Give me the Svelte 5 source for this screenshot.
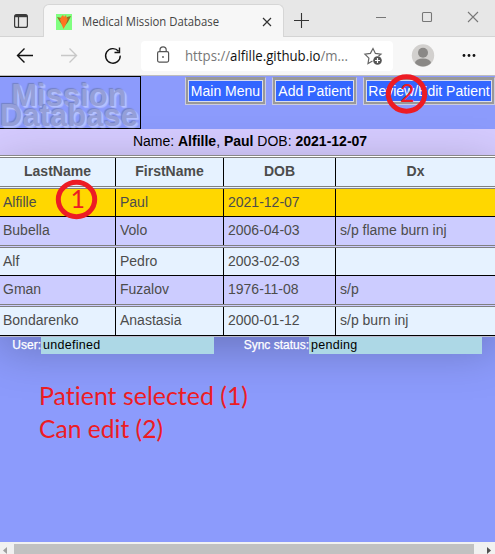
<script>
  const columns = ['LastName', 'FirstName', 'DOB', 'Dx'];
  const patients = [
    ['Alfille', 'Paul', '2021-12-07', ''],
    ['Bubella', 'Volo', '2006-04-03', 's/p flame burn inj'],
    ['Alf', 'Pedro', '2003-02-03', ''],
    ['Gman', 'Fuzalov', '1976-11-08', 's/p'],
    ['Bondarenko', 'Anastasia', '2000-01-12', 's/p burn inj']
  ];
</script>

<div class="window">
  <header class="tabs">
    <svg class="workspace" width="42" height="37" fill="none" stroke="#3b3b3b" stroke-width="1.2">
      <rect x="14.6" y="14.6" width="12.8" height="12.8" rx="2" />
      <path d="M15 16h12" stroke-width="2.4" /><path d="M18.500 17v10" />
    </svg>
    <div class="tab">
      <svg width="16" height="16" viewBox="0 0 16 16">
        <path fill="#80ff80" d="M0 0h16v16H0z" />
        <path fill="#8b7524" d="M1 3l5 1 2 3 3-4 4-1-3 6-4 5-4-5z" />
        <path fill="#ff7420" d="M5 3l2-2 1 2 2-2 1 4 1-1-2 6-2.500 5-2-5-2-6 1 1z" />
      </svg>
      <svg class="title" width="142" height="22"><text x="0" y="15" textLength="137" lengthAdjust="spacingAndGlyphs">Medical Mission Database</text></svg>
      <svg class="close" width="10" height="10" stroke="#333" stroke-width="1.2"><path d="M1 1l8 8M9 1l-8 8" /></svg>
    </div>
    <svg class="controls" width="210" height="37" fill="none" stroke="#777" stroke-width="1.1">
      <path stroke="#333" d="M10 20.500h15M17.500 13v15" />
      <path d="M92 17.500h10M184 12l10 10M194 12l-10 10" />
      <rect x="138.500" y="12.500" width="9" height="9" rx="1" />
    </svg>
  </header>

  <nav class="toolbar">
    <svg width="141" height="38" fill="none" stroke-width="1.4">
      <path stroke="#111" d="M33 18.500H18M24.500 11.500l-7 7 7 7" />
      <path stroke="#c8c8c8" d="M61 18.500h15M69.500 11.500l7 7-7 7" />
      <path stroke="#111" d="M118.500 14.200a7.300 7.300 0 1 0 1.700 4.400M119.500 10.500v5h-5" />
    </svg>
    <div class="address">
      <svg width="46" height="30" fill="none" stroke="#555" stroke-width="1.2">
        <rect x="16.600" y="10.600" width="11" height="10.500" rx="1.500" />
        <path d="M19 10.500v-1.500a3.100 3.100 0 0 1 6.200 0v1.500" />
        <circle cx="22" cy="16" r=".9" fill="#555" stroke="none" />
      </svg>
      <svg class="url" width="166" height="30"><text x="0" y="19.500" textLength="163" lengthAdjust="spacingAndGlyphs">https://<tspan>alfille.github.io</tspan>/m...</text></svg>
      <svg width="26" height="30" fill="none" stroke="#666" stroke-width="1.2">
        <path d="M12.500 20l-4.500 2.500.9-5.400-4-3.900 5.500-.8L13 7.500l2.400 4.900 5.500.8-2.500 2" />
        <circle cx="17.500" cy="19.500" r="4.300" fill="#555" stroke="none" />
        <path stroke="#fff" d="M15 19.500h5M17.500 17v5" />
      </svg>
    </div>
    <svg width="102" height="38">
      <circle cx="30" cy="18.500" r="11.200" fill="#d2d0ce" />
      <circle cx="30" cy="15.700" r="5" fill="#8a8886" />
      <path d="M22 26a8 4.500 0 0 1 16 0a11 11 0 0 1-16 0z" fill="#8a8886" />
      <g fill="#111"><circle cx="71" cy="18.500" r="1.400" /><circle cx="76" cy="18.500" r="1.400" /><circle cx="81" cy="18.500" r="1.400" /></g>
    </svg>
  </nav>

  <main>
    <div class="masthead">
      <div class="logo"><span>Mission</span><span>Database</span></div>
      <div class="actions">
        <button style:width="81px">Main Menu</button>
        <button style:width="85px">Add Patient</button>
        <button style:width="132px">Review/Edit Patient</button>
      </div>
    </div>
    <div class="patient">Name: <b>Alfille</b>, <b>Paul</b> DOB: <b>2021-12-07</b></div>
    <div class="table">
      <div class="row head">
        {#each columns as name}<div>{name}</div>{/each}
      </div>
      {#each patients as patient, i}
        <div class="row" class:selected={i === 0} class:even={i % 2 === 1}>
          {#each patient as value}<div>{value}</div>{/each}
        </div>
      {/each}
    </div>
    <div class="status">
      <label for="user">User:</label><output id="user">undefined</output>
      <label class="sync" for="sync">Sync status:</label><output id="sync">pending</output>
    </div>
    <svg class="notes" width="260" height="80">
      <text x="39" y="26" textLength="209" lengthAdjust="spacingAndGlyphs">Patient selected (1)</text>
      <text x="39" y="59" textLength="124" lengthAdjust="spacingAndGlyphs">Can edit (2)</text>
    </svg>
  </main>

  <div class="scrollbar">
    <svg width="14" height="10"><path d="M7 3v7L3 6.500z" fill="#a0a0a0" /></svg>
    <div class="thumb"></div>
    <svg width="21" height="10"><path d="M13 3v7l4-3.500z" fill="#505050" /></svg>
  </div>

  <svg class="mark one" width="42" height="40"><ellipse cx="20.500" cy="20.500" rx="18.200" ry="17.200" /><text x="14.500" y="29">1</text></svg>
  <svg class="mark two" width="42" height="40"><ellipse cx="20.500" cy="20" rx="18.200" ry="17.200" /><text x="14" y="27.500">2</text></svg>
</div>

<style>
  :global(body) { margin: 0; overflow: hidden; }
  .window { position: relative; width: 495px; height: 554px; display: flex; flex-direction: column; overflow: hidden; background: #8c9bfc; font-family: "Liberation Sans", Arial, sans-serif; }
  svg { display: block; flex: none; overflow: visible; }
  .tabs { height: 37px; flex: none; display: flex; background: #e7e7e7; box-shadow: inset 0 -1px #d4d4d4; }
  .tab { box-sizing: border-box; width: 241px; height: 33px; margin: 4px 0 0 1px; padding: 2px 11px 0 12px; display: flex; align-items: center; background: #f7f7f7; border: 1px solid #d6d6d6; border-bottom: 0; border-radius: 6px 6px 0 0; }
  .title { margin-left: 10px; }
  .title text { font: 12px "Open Sans", sans-serif; fill: #444; }
  .close { margin-left: auto; }
  .toolbar { height: 38px; flex: none; display: flex; align-items: flex-start; background: #f7f7f7; border-bottom: 1px solid #bdbdbd; }
  .address { width: 252px; height: 30px; margin-top: 4px; display: flex; background: #fff; border-radius: 4px; }
  .url { margin-left: -2px; margin-right: 9px; }
  .url text { font: 15px "Open Sans", sans-serif; fill: #777; }
  .url tspan { fill: #111; }
  main { height: 466px; flex: none; }
  .masthead { height: 53px; display: flex; justify-content: space-between; }
  .logo { box-sizing: border-box; width: 141px; height: 53px; padding: 9px 2px 0 0; border: 1px solid #000; border-left: 0; display: flex; flex-direction: column; align-items: center; color: #959fd8; font-weight: bold; font-size: 31px; line-height: 20px; text-shadow: 1px 1px 1px #b9c5ff, 2px 2px 1px #aebaff, -1px -1px 1px #7482c6; }
  .logo span { height: 20px; white-space: nowrap; }
  .actions { display: flex; gap: 6px; padding-top: 1px; }
  button { box-sizing: border-box; height: 28px; padding: 0; border: 1px solid #ccd; border-top-color: #999; box-shadow: inset 0 0 0 2px #999, inset 0 0 0 3px #d8dcee; background: #36f; color: #fff; font: 14px "Liberation Sans", sans-serif; white-space: nowrap; }
  .patient { height: 26px; box-sizing: border-box; padding: 4px 0 0 5px; background: #d5cbff; text-align: center; font-size: 14px; line-height: 17px; }
  .table { position: relative; height: 182px; box-sizing: border-box; background: #e6f2ff; border-top: 1px solid #888; border-bottom: 1px solid #bbc; box-shadow: 0 12px 45px rgba(0, 0, 0, .25); }
  .row { box-sizing: border-box; height: 30px; display: grid; grid-template-columns: 116px 108px 112px 1fr; background: #e6f2ff; border-bottom: 1px solid #000; color: #4c4c4c; font-size: 14px; line-height: 27px; }
  .row > div { padding-left: 4px; border-right: 1px solid #000; white-space: nowrap; }
  .row > div:first-child { padding-left: 3px; }
  .row > div:last-child { border-right: 0; }
  .row.head { height: 33px; box-shadow: inset 0 1px #fff, inset 0 2px #808080; border-bottom: 3px double #808080; padding-top: 2px; font-weight: bold; text-align: center; }
  .row.head > div { padding-left: 0; }
  .row.selected { height: 28px; background: gold; }
  .row.even { background: #ccf; border-bottom: 3px double #808080; height: 31px; }
  .row:nth-child(4) { height: 28px; }
  .row:last-child { height: 29px; }
  .status { display: flex; position: relative; height: 17px; line-height: 17px; }
  label { width: 41px; text-align: right; color: #fff; font-size: 12px; -webkit-text-stroke: .25px #fff; }
  label.sync { width: 95px; }
  output { width: 173px; box-sizing: border-box; padding-left: 2px; background: #add8e6; font-size: 12.500px; letter-spacing: .3px; }
  .notes { position: relative; margin-top: 25px; }
  .notes text, .mark text { font: 25px Lato, sans-serif; font-variant-ligatures: none; fill: #ed1c24; }
  .scrollbar { height: 12px; box-sizing: border-box; padding-top: 2px; display: flex; background: #f1f1f1; }
  .thumb { flex: 1; background: #c1c1c1; }
  .mark { position: absolute; }
  .mark ellipse { fill: none; stroke: #ed1c24; stroke-width: 5; }
  .one { left: 56px; top: 179px; }
  .two { left: 386px; top: 73.500px; }
</style>
